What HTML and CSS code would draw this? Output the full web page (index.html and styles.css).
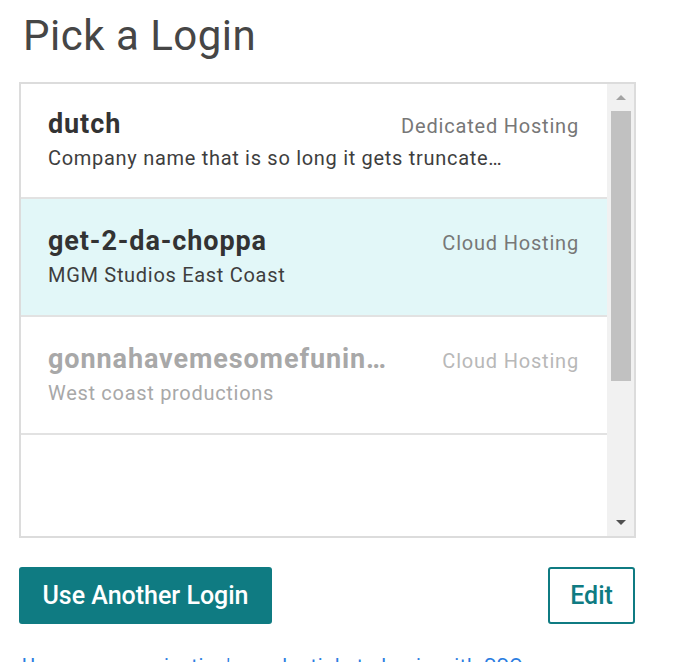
FILE: index.html
```html
<!DOCTYPE html>
<html>
<head>
<meta charset="utf-8">
<link rel="stylesheet" href="styles.css">
</head>
<body>
<div class="page">
  <h1 class="title">Pick a Login</h1>
  <div class="box">
    <div class="list">
      <div class="row first">
        <div class="row-top">
          <span class="name">dutch</span>
          <span class="host">Dedicated Hosting</span>
        </div>
        <div class="sub">Company name that is so long it gets truncated because it is long</div>
      </div>
      <div class="row selected">
        <div class="row-top">
          <span class="name">get-2-da-choppa</span>
          <span class="host">Cloud Hosting</span>
        </div>
        <div class="sub">MGM Studios East Coast</div>
      </div>
      <div class="row disabled">
        <div class="row-top">
          <span class="name">gonnahavemesomefuninthesun</span>
          <span class="host">Cloud Hosting</span>
        </div>
        <div class="sub">West coast productions</div>
      </div>
    </div>
    <div class="scrollbar">
      <div class="arrow up"></div>
      <div class="track"><div class="thumb"></div></div>
      <div class="arrow down"></div>
    </div>
  </div>
  <div class="actions">
    <button class="btn primary">Use Another Login</button>
    <button class="btn outline">Edit</button>
  </div>
  <a class="link" href="#">Use your organization's credentials to log in with SSO</a>
</div>
</body>
</html>
```

FILE: styles.css
```css
html, body {
  margin: 0;
  padding: 0;
  background: #fff;
}
body {
  font-family: Roboto, "Liberation Sans", sans-serif;
  overflow: hidden;
}
.page {
  padding: 0 0 0 19px;
  width: 617px;
}
.title {
  margin: 0;
  padding: 11px 0 0 4px;
  height: 82px;
  box-sizing: border-box;
  font-size: 42px;
  font-weight: 400;
  letter-spacing: 0.5px;
  color: #464646;
  line-height: 50px;
}
.box {
  border: 2px solid #dcdcdc;
  height: 452px;
  display: flex;
  overflow: hidden;
}
.list {
  flex: 1;
  min-width: 0;
}
.row {
  height: 90px;
  border-bottom: 2px solid #e2e2e2;
  padding: 26px 28px 0 27px;
}
.row.first {
  height: 89px;
  padding-top: 24px;
}
.row.selected {
  background: #e2f7f8;
}
.row-top {
  display: flex;
  align-items: baseline;
  gap: 50px;
}
.name {
  flex: 1;
  min-width: 0;
  font-size: 27px;
  font-weight: 700;
  letter-spacing: 0.9px;
  color: #333;
  white-space: nowrap;
  overflow: hidden;
  text-overflow: ellipsis;
  line-height: 32px;
}
.host {
  font-size: 20px;
  letter-spacing: 0.8px;
  color: #777;
  white-space: nowrap;
}
.sub {
  margin-top: 6px;
  padding-right: 72px;
  font-size: 20px;
  letter-spacing: 0.7px;
  color: #3e3e3e;
  white-space: nowrap;
  overflow: hidden;
  text-overflow: ellipsis;
  line-height: 24px;
}
.disabled .name,
.disabled .sub {
  color: #a8a8a8;
}
.disabled .host {
  color: #b8b8b8;
}
.scrollbar {
  width: 27px;
  background: #f1f1f1;
  display: flex;
  flex-direction: column;
  align-items: center;
}
.arrow {
  height: 27px;
  width: 27px;
  display: flex;
  align-items: center;
  justify-content: center;
  flex: none;
}
.arrow::before {
  content: "";
  width: 0;
  height: 0;
  border-left: 5px solid transparent;
  border-right: 5px solid transparent;
}
.arrow.up::before {
  border-bottom: 5px solid #a3a3a3;
}
.arrow.down::before {
  border-top: 5px solid #505050;
}
.track {
  flex: 1;
  width: 100%;
  display: flex;
  justify-content: center;
}
.thumb {
  width: 20px;
  height: 270px;
  background: #c1c1c1;
}
.actions {
  display: flex;
  justify-content: space-between;
  margin-top: 29px;
}
.btn {
  font-family: Roboto, "Liberation Sans", sans-serif;
  font-size: 25px;
  font-weight: 500;
  height: 57px;
  border-radius: 3px;
  cursor: pointer;
  padding: 0;
}
.primary {
  background: #0f7b82;
  color: #fff;
  border: none;
  width: 253px;
}
.outline {
  background: #fff;
  color: #0f7b82;
  border: 2px solid #0f7b82;
  width: 87px;
  margin-right: 1px;
}
.link {
  display: block;
  margin-top: 30px;
  padding-left: 3px;
  font-size: 20px;
  letter-spacing: 0.6px;
  color: #2a7de1;
  text-decoration: none;
  line-height: 24px;
  white-space: nowrap;
}
```
